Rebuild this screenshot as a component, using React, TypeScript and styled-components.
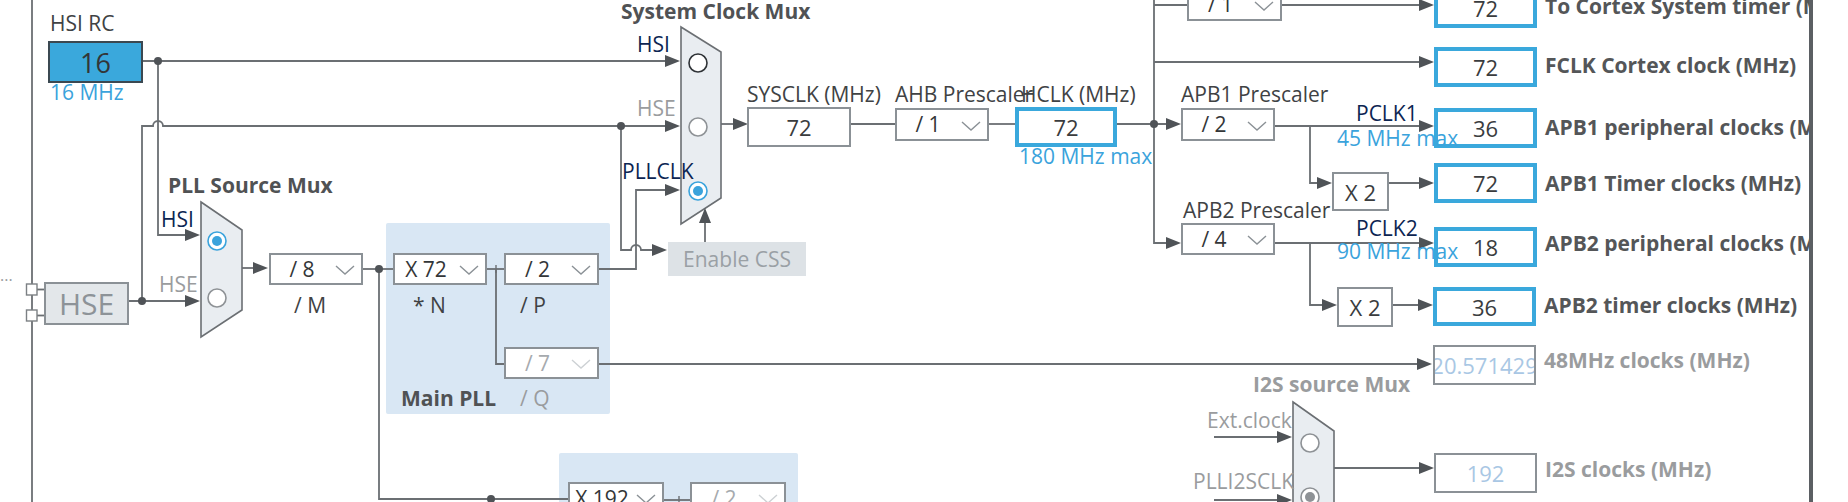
import React from "react";
import styled, { createGlobalStyle } from "styled-components";

type Tone = "plain" | "blue" | "off";
type Ink = "dark" | "blue" | "navy" | "gray" | "title" | "titleGray" | "out" | "outGray";

const INK: Record<Ink, { color: string; weight: number }> = {
  dark: { color: "#404244", weight: 400 },
  blue: { color: "#3aa3dc", weight: 400 },
  navy: { color: "#0c2552", weight: 400 },
  gray: { color: "#9a9c9e", weight: 400 },
  title: { color: "#505254", weight: 700 },
  titleGray: { color: "#9a9c9e", weight: 700 },
  out: { color: "#545658", weight: 700 },
  outGray: { color: "#9a9c9e", weight: 700 },
};

// loose texts around the muxes (x = left, y = middle of the capitals)
const TAGS: { text: string; x: number; y: number; size?: number; ink: Ink }[] = [
  { text: "...", x: 0, y: 276, size: 16, ink: "gray" },
  { text: "PLL Source Mux", x: 168, y: 186, ink: "title" },
  { text: "HSI", x: 161, y: 220, ink: "navy" },
  { text: "HSE", x: 159, y: 285, ink: "gray" },
  { text: "System Clock Mux", x: 621, y: 12, ink: "title" },
  { text: "HSI", x: 637, y: 45, ink: "navy" },
  { text: "HSE", x: 637, y: 109, ink: "gray" },
  { text: "PLLCLK", x: 622, y: 172, ink: "navy" },
  { text: "PCLK1", x: 1356, y: 114, ink: "navy" },
  { text: "45 MHz max", x: 1337, y: 139, ink: "blue" },
  { text: "PCLK2", x: 1356, y: 229, ink: "navy" },
  { text: "90 MHz max", x: 1337, y: 252, ink: "blue" },
  { text: "I2S source Mux", x: 1253, y: 385, ink: "titleGray" },
  { text: "Ext.clock", x: 1207, y: 421, ink: "gray" },
  { text: "PLLI2SCLK", x: 1193, y: 482, ink: "gray" },
];

// lift = how far the label sits above the middle of its box
const OUTPUTS: { v: string; label: string; x: number; y: number; h?: number; lift: number; tone: Tone }[] = [
  { v: "72", label: "To Cortex System timer (MHz)", x: 1434, y: -12, lift: 2, tone: "blue" },
  { v: "72", label: "FCLK Cortex clock (MHz)", x: 1434, y: 47, lift: 2, tone: "blue" },
  { v: "36", label: "APB1 peripheral clocks (MHz)", x: 1434, y: 108, lift: 1, tone: "blue" },
  { v: "72", label: "APB1 Timer clocks (MHz)", x: 1434, y: 163, lift: 0, tone: "blue" },
  { v: "18", label: "APB2 peripheral clocks (MHz)", x: 1434, y: 227, lift: 4, tone: "blue" },
  { v: "36", label: "APB2 timer clocks (MHz)", x: 1433, y: 287, h: 39, lift: 2, tone: "blue" },
  { v: "20.571429", label: "48MHz clocks (MHz)", x: 1433, y: 345, lift: 5, tone: "off" },
  { v: "192", label: "I2S clocks (MHz)", x: 1434, y: 453, lift: 4, tone: "off" },
];

const WIRES = [
  "M32 0 V502",
  "M143 61 H674",
  "M158 61 V235 H194",
  "M142 301 V126 H153 A5 5 0 0 1 163 126 H674",
  "M129 301 H194",
  "M621 126 V250 H631 A5 5 0 0 1 641 250 H660",
  "M242 268 H262",
  "M363 269 H393",
  "M379 269 V499 H568",
  "M487 269 H504",
  "M496 269 V364 H504",
  "M599 269 H636 V190 H674",
  "M599 364 H1426",
  "M705 242 V215",
  "M721 124 H742",
  "M851 124 H895",
  "M989 124 H1015",
  "M1117 124 H1175",
  "M1154 0 V243 H1175",
  "M1154 5 H1187",
  "M1154 62 H1428",
  "M1282 5 H1428",
  "M1275 126 H1428",
  "M1310 126 V183 H1326",
  "M1389 183 H1428",
  "M1275 243 H1428",
  "M1310 243 V305 H1331",
  "M1393 305 H1427",
  "M1214 437 H1286",
  "M1214 500 H1286",
  "M1334 468 H1428",
  "M664 500 H690",
  "M37 289.5 H44",
  "M37 315.5 H44",
];

// arrow tips: [x, y, direction]
const ARROWS: [number, number, "r" | "u"][] = [
  [680, 61, "r"], [200, 235, "r"], [680, 126, "r"], [200, 301, "r"],
  [667, 250, "r"], [268, 268, "r"], [680, 190, "r"], [1432, 364, "r"],
  [705, 208, "u"], [748, 124, "r"], [1181, 124, "r"], [1181, 243, "r"],
  [1434, 62, "r"], [1434, 5, "r"], [1434, 126, "r"], [1332, 183, "r"],
  [1434, 183, "r"], [1434, 243, "r"], [1337, 305, "r"], [1433, 305, "r"],
  [1292, 437, "r"], [1292, 500, "r"], [1434, 468, "r"],
];

const DOTS: [number, number][] = [
  [158, 61], [142, 301], [621, 126], [379, 269], [491, 499], [1154, 124],
];

const MUXES = [
  "201,202 242,230 242,310 201,337",
  "681,27 721,52 721,198 681,224",
  "1293,402 1334,431 1334,520 1293,550",
];

type RadioKind = "on" | "dark" | "gray" | "offOn";
const RADIOS: [number, number, RadioKind][] = [
  [217, 241, "on"], [217, 298, "gray"],
  [698, 63, "dark"], [698, 127, "gray"], [698, 191, "on"],
  [1310, 443, "gray"], [1310, 497, "offOn"],
];

const WIRE = "#6b6f73";
const HEAD = "#4f5357";

const Radio: React.FC<{ x: number; y: number; kind: RadioKind }> = ({ x, y, kind }) => {
  const ring = kind === "on" ? "#3aa3dc" : kind === "dark" ? "#2e3236" : "#8e9296";
  return (
    <g>
      <circle cx={x} cy={y} r={9} fill="#fff" stroke={ring} strokeWidth={1.6} />
      {kind === "on" && <circle cx={x} cy={y} r={5} fill="#3aa3dc" />}
      {kind === "offOn" && <circle cx={x} cy={y} r={5} fill="#8e9296" />}
    </g>
  );
};

const Arrow: React.FC<{ x: number; y: number; dir: "r" | "u" }> = ({ x, y, dir }) => {
  const pts =
    dir === "r"
      ? `${x - 15},${y - 6} ${x},${y} ${x - 15},${y + 6}`
      : `${x - 6},${y + 15} ${x},${y} ${x + 6},${y + 15}`;
  return <polygon points={pts} fill={HEAD} />;
};

const Dropdown: React.FC<{ value: string; w: number; h?: number; off?: boolean }> = ({
  value,
  w,
  h = 32,
  off,
}) => (
  <Select $w={w} $h={h} $off={off}>
    {value}
    <ChevronSvg width={20} height={10} viewBox="0 0 20 10">
      <polyline
        points="1,1 10,9 19,1"
        fill="none"
        stroke={off ? "#cdd1d4" : "#8b9196"}
        strokeWidth={1.4}
      />
    </ChevronSvg>
  </Select>
);

export default function App() {
  return (
    <>
      <GlobalStyle />
      <Frame>
        <Canvas>
          <MainPll>
            <Stage>
              <Dropdown value="X 72" w={94} />
              <Caption $ink="dark" $lh={40} $indent={20}>* N</Caption>
            </Stage>
            <Stage>
              <Dropdown value="/ 2" w={95} />
              <Caption $ink="dark" $lh={40} $indent={16}>/ P</Caption>
            </Stage>
            <PllTitle $ink="title" $lh={38} $indent={8}>Main PLL</PllTitle>
            <Stage>
              <Dropdown value="/ 7" w={95} off />
              <Caption $ink="gray" $lh={38} $indent={16}>/ Q</Caption>
            </Stage>
          </MainPll>
          <I2sPll>
            <Dropdown value="X 192" w={96} />
            <Dropdown value="/ 2" w={96} off />
          </I2sPll>

          <Wires width={1809} height={502}>
            {WIRES.map((d, i) => (
              <path key={i} d={d} fill="none" stroke={WIRE} strokeWidth={1.8} />
            ))}
            <path d="M496 265 V273 M679 496 V504" stroke={WIRE} strokeWidth={1.4} />
            {MUXES.map((p, i) => (
              <polygon key={i} points={p} fill="#e9edf1" stroke={WIRE} strokeWidth={1.6} />
            ))}
            {RADIOS.map(([x, y, k], i) => (
              <Radio key={i} x={x} y={y} kind={k} />
            ))}
            {ARROWS.map(([x, y, d], i) => (
              <Arrow key={i} x={x} y={y} dir={d} />
            ))}
            {DOTS.map(([x, y], i) => (
              <circle key={i} cx={x} cy={y} r={4} fill={HEAD} />
            ))}
            <rect x={26.5} y={284} width={10.5} height={11} fill="#fff" stroke="#7c8084" strokeWidth={1.4} />
            <rect x={26.5} y={310} width={10.5} height={11} fill="#fff" stroke="#7c8084" strokeWidth={1.4} />
          </Wires>

          <Node $x={48} $y={5}>
            <Caption $ink="dark" $lh={36} $indent={2}>HSI RC</Caption>
            <Oscillator $w={95} $h={42} $tone="hsi">16</Oscillator>
            <Caption $ink="blue" $lh={18} $indent={2}>16 MHz</Caption>
          </Node>
          <Node $x={44} $y={282}>
            <Oscillator $w={85} $h={43} $tone="hse">HSE</Oscillator>
          </Node>

          <Node $x={269} $y={253}>
            <Dropdown value="/ 8" w={94} />
            <Caption $ink="dark" $lh={40} $indent={25}>/ M</Caption>
          </Node>

          <CssButton>Enable CSS</CssButton>

          <Node $x={747} $y={82}>
            <Caption $ink="dark" $lh={25}>SYSCLK (MHz)</Caption>
            <ValueBox $w={104} $h={40} $tone="plain">72</ValueBox>
          </Node>
          <Node $x={895} $y={81}>
            <Caption $ink="dark" $lh={27}>AHB Prescaler</Caption>
            <Dropdown value="/ 1" w={94} h={33} />
          </Node>
          <Node $x={1015} $y={82}>
            <Caption $ink="dark" $lh={25} $indent={6}>HCLK (MHz)</Caption>
            <ValueBox $w={102} $h={40} $tone="blue">72</ValueBox>
            <Caption $ink="blue" $lh={18} $indent={4}>180 MHz max</Caption>
          </Node>

          <Node $x={1187} $y={-12}>
            <Dropdown value="/ 1" w={95} h={33} />
          </Node>
          <Node $x={1181} $y={81}>
            <Caption $ink="dark" $lh={27}>APB1 Prescaler</Caption>
            <Dropdown value="/ 2" w={94} h={33} />
          </Node>
          <Node $x={1181} $y={198}>
            <Caption $ink="dark" $lh={25} $indent={2}>APB2 Prescaler</Caption>
            <Dropdown value="/ 4" w={94} />
          </Node>
          <Node $x={1332} $y={172}>
            <ValueBox $w={57} $h={39} $tone="plain">X 2</ValueBox>
          </Node>
          <Node $x={1337} $y={287}>
            <ValueBox $w={56} $h={40} $tone="plain">X 2</ValueBox>
          </Node>

          {OUTPUTS.map((o, i) => (
            <OutputRow key={i} $x={o.x} $y={o.y}>
              <ValueBox $w={103} $h={o.h ?? 40} $tone={o.tone}>
                {o.v}
              </ValueBox>
              <OutLabel $ink={o.tone === "off" ? "outGray" : "out"} $lh={20} $lift={o.lift}>
                {o.label}
              </OutLabel>
            </OutputRow>
          ))}

          {TAGS.map((t, i) => (
            <Tag key={i} $x={t.x} $y={t.y} $size={t.size ?? 21} $ink={t.ink}>
              {t.text}
            </Tag>
          ))}
        </Canvas>
      </Frame>
    </>
  );
}

// ─── Styles ───────────────────────────────────────────────────────────────────

const GlobalStyle = createGlobalStyle`
  html, body {
    margin: 0;
    padding: 0;
    background: #ffffff;
  }
  body {
    font-family: "Open Sans", "Noto Sans", sans-serif;
  }
`;

const Frame = styled.div`
  width: 1813px;
  height: 502px;
  border-right: 4px solid #5b5f63;
  box-sizing: border-box;
  background: #fff;
`;

const Canvas = styled.div`
  position: relative;
  width: 1809px;
  height: 502px;
  overflow: hidden;
`;

const Wires = styled.svg`
  position: absolute;
  left: 0;
  top: 0;
`;

const MainPll = styled.div`
  position: absolute;
  left: 386px;
  top: 223px;
  width: 224px;
  height: 191px;
  box-sizing: border-box;
  padding: 30px 0 0 7px;
  display: grid;
  grid-template-columns: 94px 95px;
  grid-template-rows: auto auto;
  align-content: start;
  column-gap: 17px;
  row-gap: 22px;
  background: #d9e7f4;
  border-radius: 2px;
`;

const I2sPll = styled.div`
  position: absolute;
  left: 559px;
  top: 453px;
  width: 239px;
  height: 80px;
  box-sizing: border-box;
  padding: 29px 0 0 9px;
  display: flex;
  align-items: flex-start;
  gap: 26px;
  background: #d9e7f4;
  border-radius: 2px;
`;

const Stage = styled.div`
  display: flex;
  flex-direction: column;
`;

const Node = styled.div<{ $x: number; $y: number }>`
  position: absolute;
  left: ${(p) => p.$x}px;
  top: ${(p) => p.$y}px;
  display: flex;
  flex-direction: column;
  align-items: flex-start;
`;

const OutputRow = styled.div<{ $x: number; $y: number }>`
  position: absolute;
  left: ${(p) => p.$x}px;
  top: ${(p) => p.$y}px;
  display: flex;
  align-items: center;
  gap: 8px;
`;

const Caption = styled.div<{ $ink: Ink; $lh: number; $indent?: number; $size?: number }>`
  padding-left: ${(p) => p.$indent ?? 0}px;
  font-size: ${(p) => p.$size ?? 21}px;
  line-height: ${(p) => p.$lh}px;
  font-weight: ${(p) => INK[p.$ink].weight};
  color: ${(p) => INK[p.$ink].color};
  white-space: nowrap;
`;

const PllTitle = styled(Caption)`
  align-self: end;
`;

const OutLabel = styled(Caption)<{ $lift: number }>`
  padding-bottom: ${(p) => p.$lift * 2}px;
`;

const Tag = styled.div<{ $x: number; $y: number; $size: number; $ink: Ink }>`
  position: absolute;
  left: ${(p) => p.$x}px;
  top: ${(p) => p.$y - 8.6}px;
  font-size: ${(p) => p.$size}px;
  line-height: 16px;
  font-weight: ${(p) => INK[p.$ink].weight};
  color: ${(p) => INK[p.$ink].color};
  white-space: nowrap;
`;

const Oscillator = styled.div<{ $w: number; $h: number; $tone: "hsi" | "hse" }>`
  width: ${(p) => p.$w}px;
  height: ${(p) => p.$h}px;
  box-sizing: border-box;
  display: flex;
  align-items: center;
  justify-content: center;
  border: 2px solid ${(p) => (p.$tone === "hsi" ? "#3b4851" : "#8b9196")};
  background: ${(p) => (p.$tone === "hsi" ? "#3aa8dc" : "#e3e7ea")};
  color: ${(p) => (p.$tone === "hsi" ? "#333638" : "#8d9398")};
  font-size: ${(p) => (p.$tone === "hsi" ? 27 : 30)}px;
  line-height: 1;
`;

const CssButton = styled.div`
  position: absolute;
  left: 668px;
  top: 242px;
  width: 138px;
  height: 34px;
  display: flex;
  align-items: center;
  justify-content: center;
  background: #dde2e6;
  color: #9aa0a5;
  font-size: 21px;
  line-height: 1;
`;

const Select = styled.div<{ $w: number; $h: number; $off?: boolean }>`
  position: relative;
  width: ${(p) => p.$w}px;
  height: ${(p) => p.$h}px;
  box-sizing: border-box;
  padding-right: 28px;
  display: flex;
  align-items: center;
  justify-content: center;
  border: 2px solid #8b9196;
  background: #fff;
  color: ${(p) => (p.$off ? "#a6aaae" : "#333638")};
  font-size: 21px;
  line-height: 1;
  white-space: nowrap;
  overflow: hidden;
`;

const ChevronSvg = styled.svg`
  position: absolute;
  right: 6px;
  top: 50%;
  margin-top: -4px;
`;

const ValueBox = styled.div<{ $w: number; $h: number; $tone: Tone }>`
  flex: none;
  width: ${(p) => p.$w}px;
  height: ${(p) => p.$h}px;
  box-sizing: border-box;
  display: flex;
  align-items: center;
  justify-content: center;
  border: ${(p) => (p.$tone === "blue" ? "4px solid #3aa8dc" : "2px solid #8b9196")};
  background: #fff;
  color: ${(p) => (p.$tone === "off" ? "#a9c7e4" : "#3a3c3e")};
  font-size: 22px;
  line-height: 1;
  white-space: nowrap;
  overflow: hidden;
`;
